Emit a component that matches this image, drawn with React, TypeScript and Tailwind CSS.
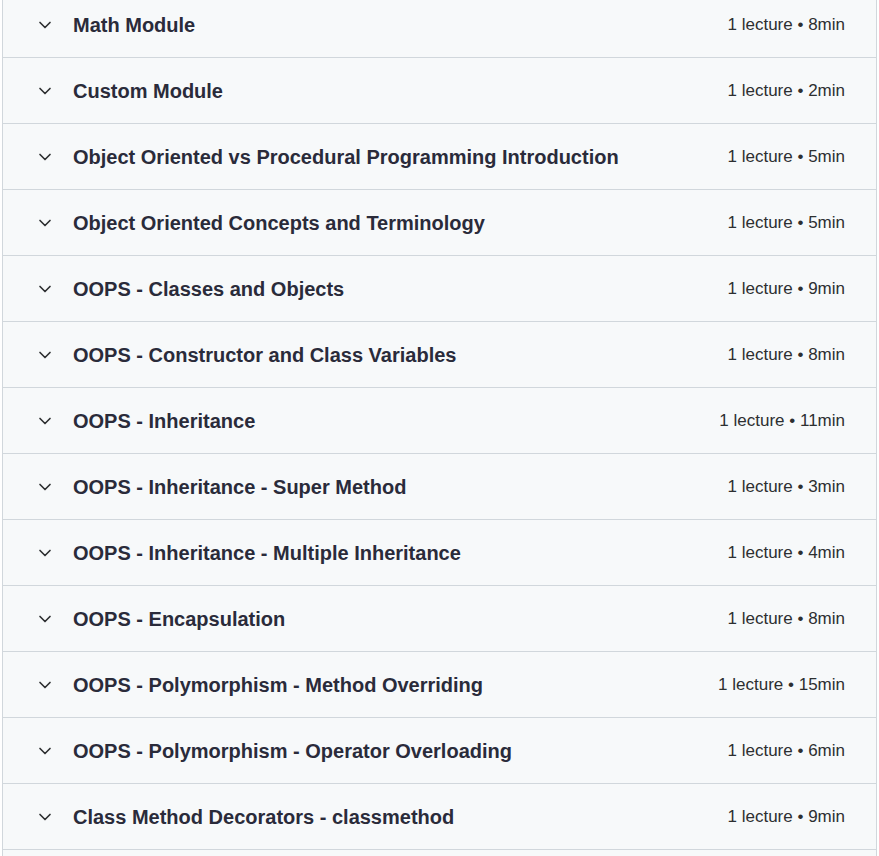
import { ChevronDown } from 'lucide-react'

type Section = { title: string; lectures: number; minutes: number }

const sections: Section[] = [
  { title: 'Math Module', lectures: 1, minutes: 8 },
  { title: 'Custom Module', lectures: 1, minutes: 2 },
  { title: 'Object Oriented vs Procedural Programming Introduction', lectures: 1, minutes: 5 },
  { title: 'Object Oriented Concepts and Terminology', lectures: 1, minutes: 5 },
  { title: 'OOPS - Classes and Objects', lectures: 1, minutes: 9 },
  { title: 'OOPS - Constructor and Class Variables', lectures: 1, minutes: 8 },
  { title: 'OOPS - Inheritance', lectures: 1, minutes: 11 },
  { title: 'OOPS - Inheritance - Super Method', lectures: 1, minutes: 3 },
  { title: 'OOPS - Inheritance - Multiple Inheritance', lectures: 1, minutes: 4 },
  { title: 'OOPS - Encapsulation', lectures: 1, minutes: 8 },
  { title: 'OOPS - Polymorphism - Method Overriding', lectures: 1, minutes: 15 },
  { title: 'OOPS - Polymorphism - Operator Overloading', lectures: 1, minutes: 6 },
  { title: 'Class Method Decorators - classmethod', lectures: 1, minutes: 9 },
  { title: 'Class Method Decorators - staticmethod', lectures: 1, minutes: 7 },
]

function SectionRow({ section }: { section: Section }) {
  return (
    <button className="flex h-[66px] w-full items-center border-t border-[#d1d7dc] pl-[32px] pr-[31px] text-left">
      <ChevronDown size={20} strokeWidth={2} className="shrink-0 text-[#2d2f31]" />
      <span className="ml-[18px] flex-1 text-[20px] font-bold text-[#2a2b3a]">{section.title}</span>
      <span className="text-[17px] text-[#2d2f31]">
        {section.lectures} lecture • {section.minutes}min
      </span>
    </button>
  )
}

export default function App() {
  return (
    <div className="min-h-screen bg-white font-['Liberation_Sans',sans-serif]">
      <div className="mx-[2px] -mt-[9px] border-x border-[#d1d7dc] bg-[#f7f9fa]">
        {sections.map((s) => (
          <SectionRow key={s.title} section={s} />
        ))}
      </div>
    </div>
  )
}
